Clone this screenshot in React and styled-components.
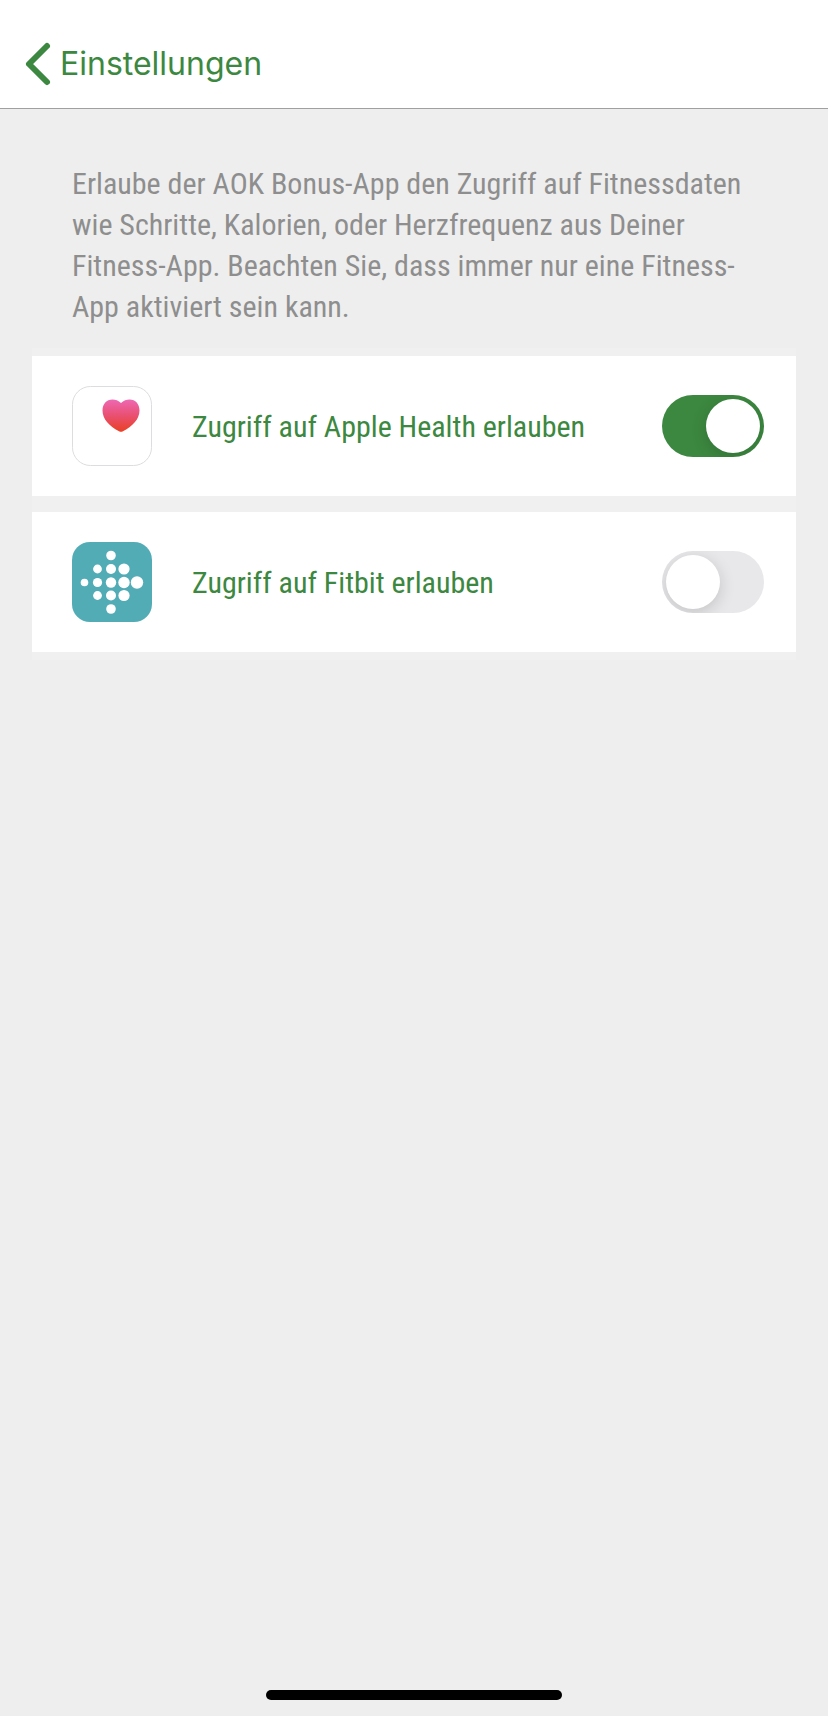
import { useState } from 'react';
import styled, { createGlobalStyle } from 'styled-components';

const GlobalStyle = createGlobalStyle`
  * {
    box-sizing: border-box;
  }
  body {
    margin: 0;
    background-color: #eeeeee;
  }
`;

const Page = styled.div`
  display: flex;
  flex-direction: column;
  min-height: 100vh;
  background-color: #eeeeee;
  font-family: 'Roboto Condensed', Roboto, sans-serif;
`;

const Header = styled.header`
  display: flex;
  padding: 40px 24px 20px;
  background-color: #ffffff;
  border-bottom: 1px solid #a0a0a0;
`;

const BackLink = styled.a`
  display: flex;
  align-items: center;
  gap: 8px;
  height: 48px;
  color: #3c8840;
  font-family: Inter, sans-serif;
  font-size: 32px;
  line-height: 48px;
  text-decoration: none;
`;

const Main = styled.main`
  padding: 0 32px;
`;

const Intro = styled.p`
  margin: 0;
  padding: 54px 40px 21px;
  color: #8e8e8e;
  font-size: 30px;
  line-height: 41px;
`;

const List = styled.ul`
  display: flex;
  flex-direction: column;
  gap: 16px;
  margin: 0;
  padding: 8px 0;
  list-style: none;
  background-color: #f0f0f0;
`;

const ListItem = styled.li`
  display: flex;
  align-items: center;
  padding: 30px 32px 30px 40px;
  background-color: #ffffff;
`;

const Label = styled.label`
  flex: 1;
  padding: 0 40px;
  color: #3c8840;
  font-size: 30px;
  line-height: 41px;
`;

const Switch = styled.input`
  appearance: none;
  flex-shrink: 0;
  width: 102px;
  height: 62px;
  margin: 0;
  padding: 4px;
  border-radius: 31px;
  background-color: #e8e8ea;
  overflow: hidden;
  cursor: pointer;

  &::before {
    content: '';
    display: block;
    width: 54px;
    height: 54px;
    border-radius: 50%;
    background-color: #ffffff;
    box-shadow: 0 4px 16px rgba(0, 0, 0, 0.16);
  }
  &:checked {
    background-color: #3c8840;
  }
  &:checked::before {
    margin-left: auto;
  }
`;

const HomeIndicator = styled.div`
  width: 296px;
  height: 10px;
  margin: auto auto 16px;
  border-radius: 5px;
  background-color: #000000;
`;

function HealthIcon() {
  return (
    <svg width="80" height="80" viewBox="0 0 80 80" aria-hidden="true">
      <defs>
        <linearGradient id="heart" x1="0" y1="0" x2="0" y2="1">
          <stop offset="0" stopColor="#ee68b4" />
          <stop offset="0.5" stopColor="#e95070" />
          <stop offset="1" stopColor="#ea4025" />
        </linearGradient>
      </defs>
      <rect x="0.5" y="0.5" width="79" height="79" rx="18" fill="#fff" stroke="#dddddf" />
      <path
        d="M49 17C46.5 14.5 43.5 13.5 40.5 13.5C34.5 13.5 30.5 18 30.5 24.5C30.5 33 37 40 47 45.2C48.4 46 49.6 46 51 45.2C61 40 67.5 33 67.5 24.5C67.5 18 63.5 13.5 57.5 13.5C54.5 13.5 51.5 14.5 49 17Z"
        fill="url(#heart)"
      />
    </svg>
  );
}

const dots = [
  [39, 13.5, 4.8],
  [25.5, 27, 4.4],
  [39, 27, 5],
  [52, 27, 5.6],
  [12.5, 40.5, 3.8],
  [25.5, 40.5, 4.6],
  [39, 40.5, 5.2],
  [52, 40.5, 5.7],
  [65, 40.5, 6.2],
  [25.5, 53.5, 4.4],
  [39, 53.5, 5],
  [52, 53.5, 5.6],
  [39, 67, 4.8],
];

function FitbitIcon() {
  return (
    <svg width="80" height="80" viewBox="0 0 80 80" aria-hidden="true">
      <rect width="80" height="80" rx="18" fill="#52acb6" />
      {dots.map(([cx, cy, r]) => (
        <circle key={`${cx}-${cy}`} cx={cx} cy={cy} r={r} fill="#fff" />
      ))}
    </svg>
  );
}

const apps = [
  { id: 'health', name: 'Apple Health', Icon: HealthIcon },
  { id: 'fitbit', name: 'Fitbit', Icon: FitbitIcon },
];

export default function App() {
  const [active, setActive] = useState('health');

  return (
    <Page>
      <GlobalStyle />
      <Header>
        <BackLink href="#einstellungen">
          <svg width="28" height="48" viewBox="0 0 28 48" fill="none" aria-hidden="true">
            <path
              d="M23 6L5 24L23 42"
              stroke="currentColor"
              strokeWidth="6"
              strokeLinecap="round"
              strokeLinejoin="round"
            />
          </svg>
          Einstellungen
        </BackLink>
      </Header>
      <Main>
        <Intro>
          Erlaube der AOK Bonus-App den Zugriff auf Fitnessdaten wie Schritte, Kalorien, oder
          Herzfrequenz aus Deiner Fitness-App. Beachten Sie, dass immer nur eine Fitness-App
          aktiviert sein kann.
        </Intro>
        <List>
          {apps.map(({ id, name, Icon }) => (
            <ListItem key={id}>
              <Icon />
              <Label htmlFor={id}>Zugriff auf {name} erlauben</Label>
              <Switch
                id={id}
                type="checkbox"
                role="switch"
                checked={active === id}
                onChange={() => setActive(active === id ? null : id)}
              />
            </ListItem>
          ))}
        </List>
      </Main>
      <HomeIndicator />
    </Page>
  );
}
